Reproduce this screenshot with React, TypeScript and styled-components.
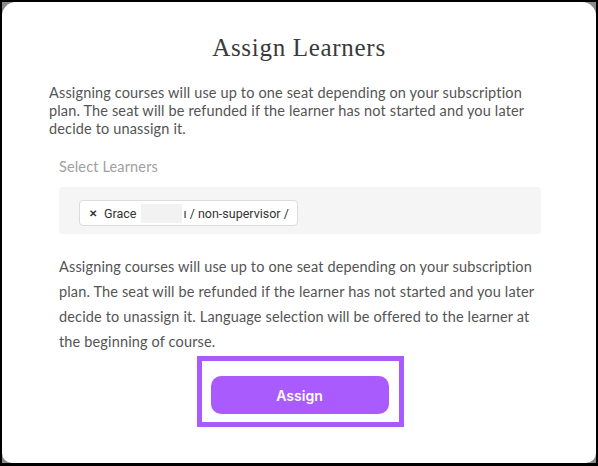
import React from "react";
import styled, { createGlobalStyle } from "styled-components";

const Global = createGlobalStyle`
  html, body { margin: 0; padding: 0; background: #000; }
  * { box-sizing: border-box; }
`;

const Frame = styled.div`
  width: 598px;
  height: 466px;
  background: #000;
  padding: 2px 2px 3px 2px;
`;

const Backdrop = styled.div`
  width: 100%;
  height: 100%;
  background: #8b8b8e;
`;

const Modal = styled.div`
  width: 100%;
  height: 100%;
  background: #fff;
  border-radius: 14px 14px 10px 10px;
  padding: 31px 47px 0 47px;
  display: flex;
  flex-direction: column;
`;

const Title = styled.h2`
  margin: 0;
  font-family: "Liberation Serif", "DejaVu Serif", serif;
  font-weight: 400;
  font-size: 25px;
  letter-spacing: 0.7px;
  line-height: 30px;
  color: #3a3a3a;
  text-align: center;
`;

const Intro = styled.p`
  margin: 21px 0 0 0;
  font-family: Lato, "Open Sans", sans-serif;
  font-size: 14.5px;
  line-height: 18px;
  letter-spacing: 0.15px;
  color: #545454;
`;

const Section = styled.div`
  padding: 0 8px 0 10px;
  display: flex;
  flex-direction: column;
`;

const Label = styled.div`
  margin-top: 20px;
  font-family: Lato, "Open Sans", sans-serif;
  font-size: 14.5px;
  line-height: 18px;
  color: #a0a0a0;
  letter-spacing: 0.15px;
`;

const SelectBox = styled.div`
  margin-top: 11px;
  height: 47px;
  background: #f5f5f5;
  border-radius: 4px;
  padding: 13px 20px;
  display: flex;
  align-items: flex-start;
`;

const Chip = styled.div`
  height: 26px;
  background: #fff;
  border: 1px solid #dcdcdc;
  border-radius: 4px;
  padding: 0 8px 0 9px;
  display: flex;
  align-items: center;
  font-family: Roboto, "Liberation Sans", sans-serif;
  font-size: 12.5px;
  color: #333;
  white-space: pre;
`;

const Remove = styled.span`
  font-size: 10px;
  font-weight: 700;
  margin-right: 7px;
`;

const Redacted = styled.span`
  display: inline-block;
  width: 41px;
  height: 19px;
  background: #f2f2f2;
  margin: 0 1px 0 5px;
`;

const Details = styled.p`
  margin: 20px 0 0 0;
  font-family: Lato, "Open Sans", sans-serif;
  font-size: 14.5px;
  line-height: 25px;
  letter-spacing: 0.15px;
  color: #545454;
`;

const Actions = styled.div`
  display: flex;
  justify-content: center;
  margin-top: 2px;
`;

const FocusRing = styled.div`
  border: 5px solid #a95bfe;
  padding: 15px 10px 8px 9px;
  margin-left: 2px;
`;

const Button = styled.button`
  width: 178px;
  height: 38px;
  border: none;
  border-radius: 10px;
  background: #a95bfe;
  color: #fff;
  font-family: Inter, "Open Sans", sans-serif;
  font-weight: 600;
  font-size: 14px;
  cursor: pointer;
`;

export default function App() {
  return (
    <>
      <Global />
      <Frame>
        <Backdrop>
          <Modal>
            <Title>Assign Learners</Title>
            <Intro>
              Assigning courses will use up to one seat depending on your subscription plan. The seat
              will be refunded if the learner has not started and you later decide to unassign it.
            </Intro>
            <Section>
              <Label>Select Learners</Label>
              <SelectBox>
                <Chip>
                  <Remove>✕</Remove>Grace<Redacted />ı / non-supervisor /
                </Chip>
              </SelectBox>
              <Details>
                Assigning courses will use up to one seat depending on your subscription plan. The seat
                will be refunded if the learner has not started and you later decide to unassign it.
                Language selection will be offered to the learner at the beginning of course.
              </Details>
            </Section>
            <Actions>
              <FocusRing>
                <Button>Assign</Button>
              </FocusRing>
            </Actions>
          </Modal>
        </Backdrop>
      </Frame>
    </>
  );
}
